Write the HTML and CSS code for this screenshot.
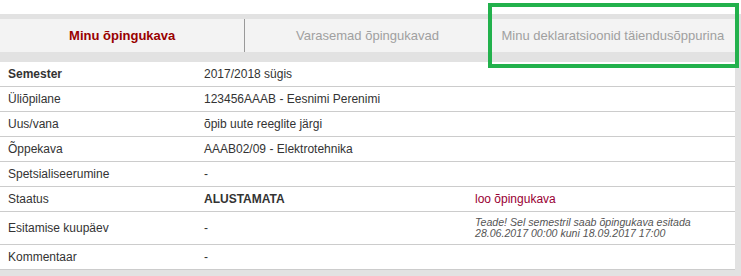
FILE: index.html
```html
<!DOCTYPE html>
<html lang="et">
<head>
    <meta charset="UTF-8">
    <meta name="viewport" content="width=device-width, initial-scale=1.0">
    <title>Minu õpingukava</title>
    <link rel="stylesheet" href="styles.css">
</head>
<body>
    <div class="page">
        <div class="panel">
            <div class="tabs">
                <div class="tab active">Minu õpingukava</div>
                <div class="tab">Varasemad õpingukavad</div>
                <div class="tab">Minu deklaratsioonid täiendusõppurina</div>
            </div>

            <table class="info">
                <tr>
                    <td class="label"><b>Semester</b></td>
                    <td class="value">2017/2018 sügis</td>
                    <td class="extra"></td>
                </tr>
                <tr>
                    <td class="label">Üliõpilane</td>
                    <td class="value">123456AAAB - Eesnimi Perenimi</td>
                    <td class="extra"></td>
                </tr>
                <tr>
                    <td class="label">Uus/vana</td>
                    <td class="value">õpib uute reeglite järgi</td>
                    <td class="extra"></td>
                </tr>
                <tr>
                    <td class="label">Õppekava</td>
                    <td class="value">AAAB02/09 - Elektrotehnika</td>
                    <td class="extra"></td>
                </tr>
                <tr>
                    <td class="label">Spetsialiseerumine</td>
                    <td class="value">-</td>
                    <td class="extra"></td>
                </tr>
                <tr>
                    <td class="label">Staatus</td>
                    <td class="value"><b>ALUSTAMATA</b></td>
                    <td class="extra"><a class="action" href="#">loo õpingukava</a></td>
                </tr>
                <tr>
                    <td class="label">Esitamise kuupäev</td>
                    <td class="value">-</td>
                    <td class="extra"><div class="notice">Teade! Sel semestril saab õpingukava esitada<br>28.06.2017 00:00 kuni 18.09.2017 17:00</div></td>
                </tr>
                <tr>
                    <td class="label">Kommentaar</td>
                    <td class="value">-</td>
                    <td class="extra"></td>
                </tr>
            </table>
        </div>

        <!-- highlight box drawn over the third tab -->
        <div class="highlight"></div>
    </div>
</body>
</html>
```

FILE: styles.css
```css
body { margin: 0; padding: 0; font-family: "Liberation Sans", Arial, sans-serif; font-size: 12px; color: #333; background-color: #fff; }
.page { position: relative; padding-top: 14px; }
.panel { background-color: #e2e2e2; padding: 5px 6px 7px 0; }
.tabs { display: flex; height: 33px; background-color: #f3f3f3; margin-bottom: 10px; }
.tab { flex: 1; display: flex; align-items: center; justify-content: center; color: #a0a0a0; font-size: 13px; }
.tab + .tab { border-left: 1px solid #999; }
.tab.active { color: #990000; font-weight: bold; }
.info { width: 100%; border-collapse: collapse; background-color: #fff; }
.info td { padding: 4px 8px; line-height: 16px; border-bottom: 1px solid #ccc; vertical-align: middle; }
.info .label { width: 180px; }
.info .value { width: 255px; }
.action { color: #990033; text-decoration: none; }
.notice { font-size: 10.6px; font-style: italic; line-height: 11px; color: #555; padding: 1px 0; }
.highlight { position: absolute; left: 488px; top: 3px; width: 243px; height: 57px; border: 4px solid #22b14c; }
```
